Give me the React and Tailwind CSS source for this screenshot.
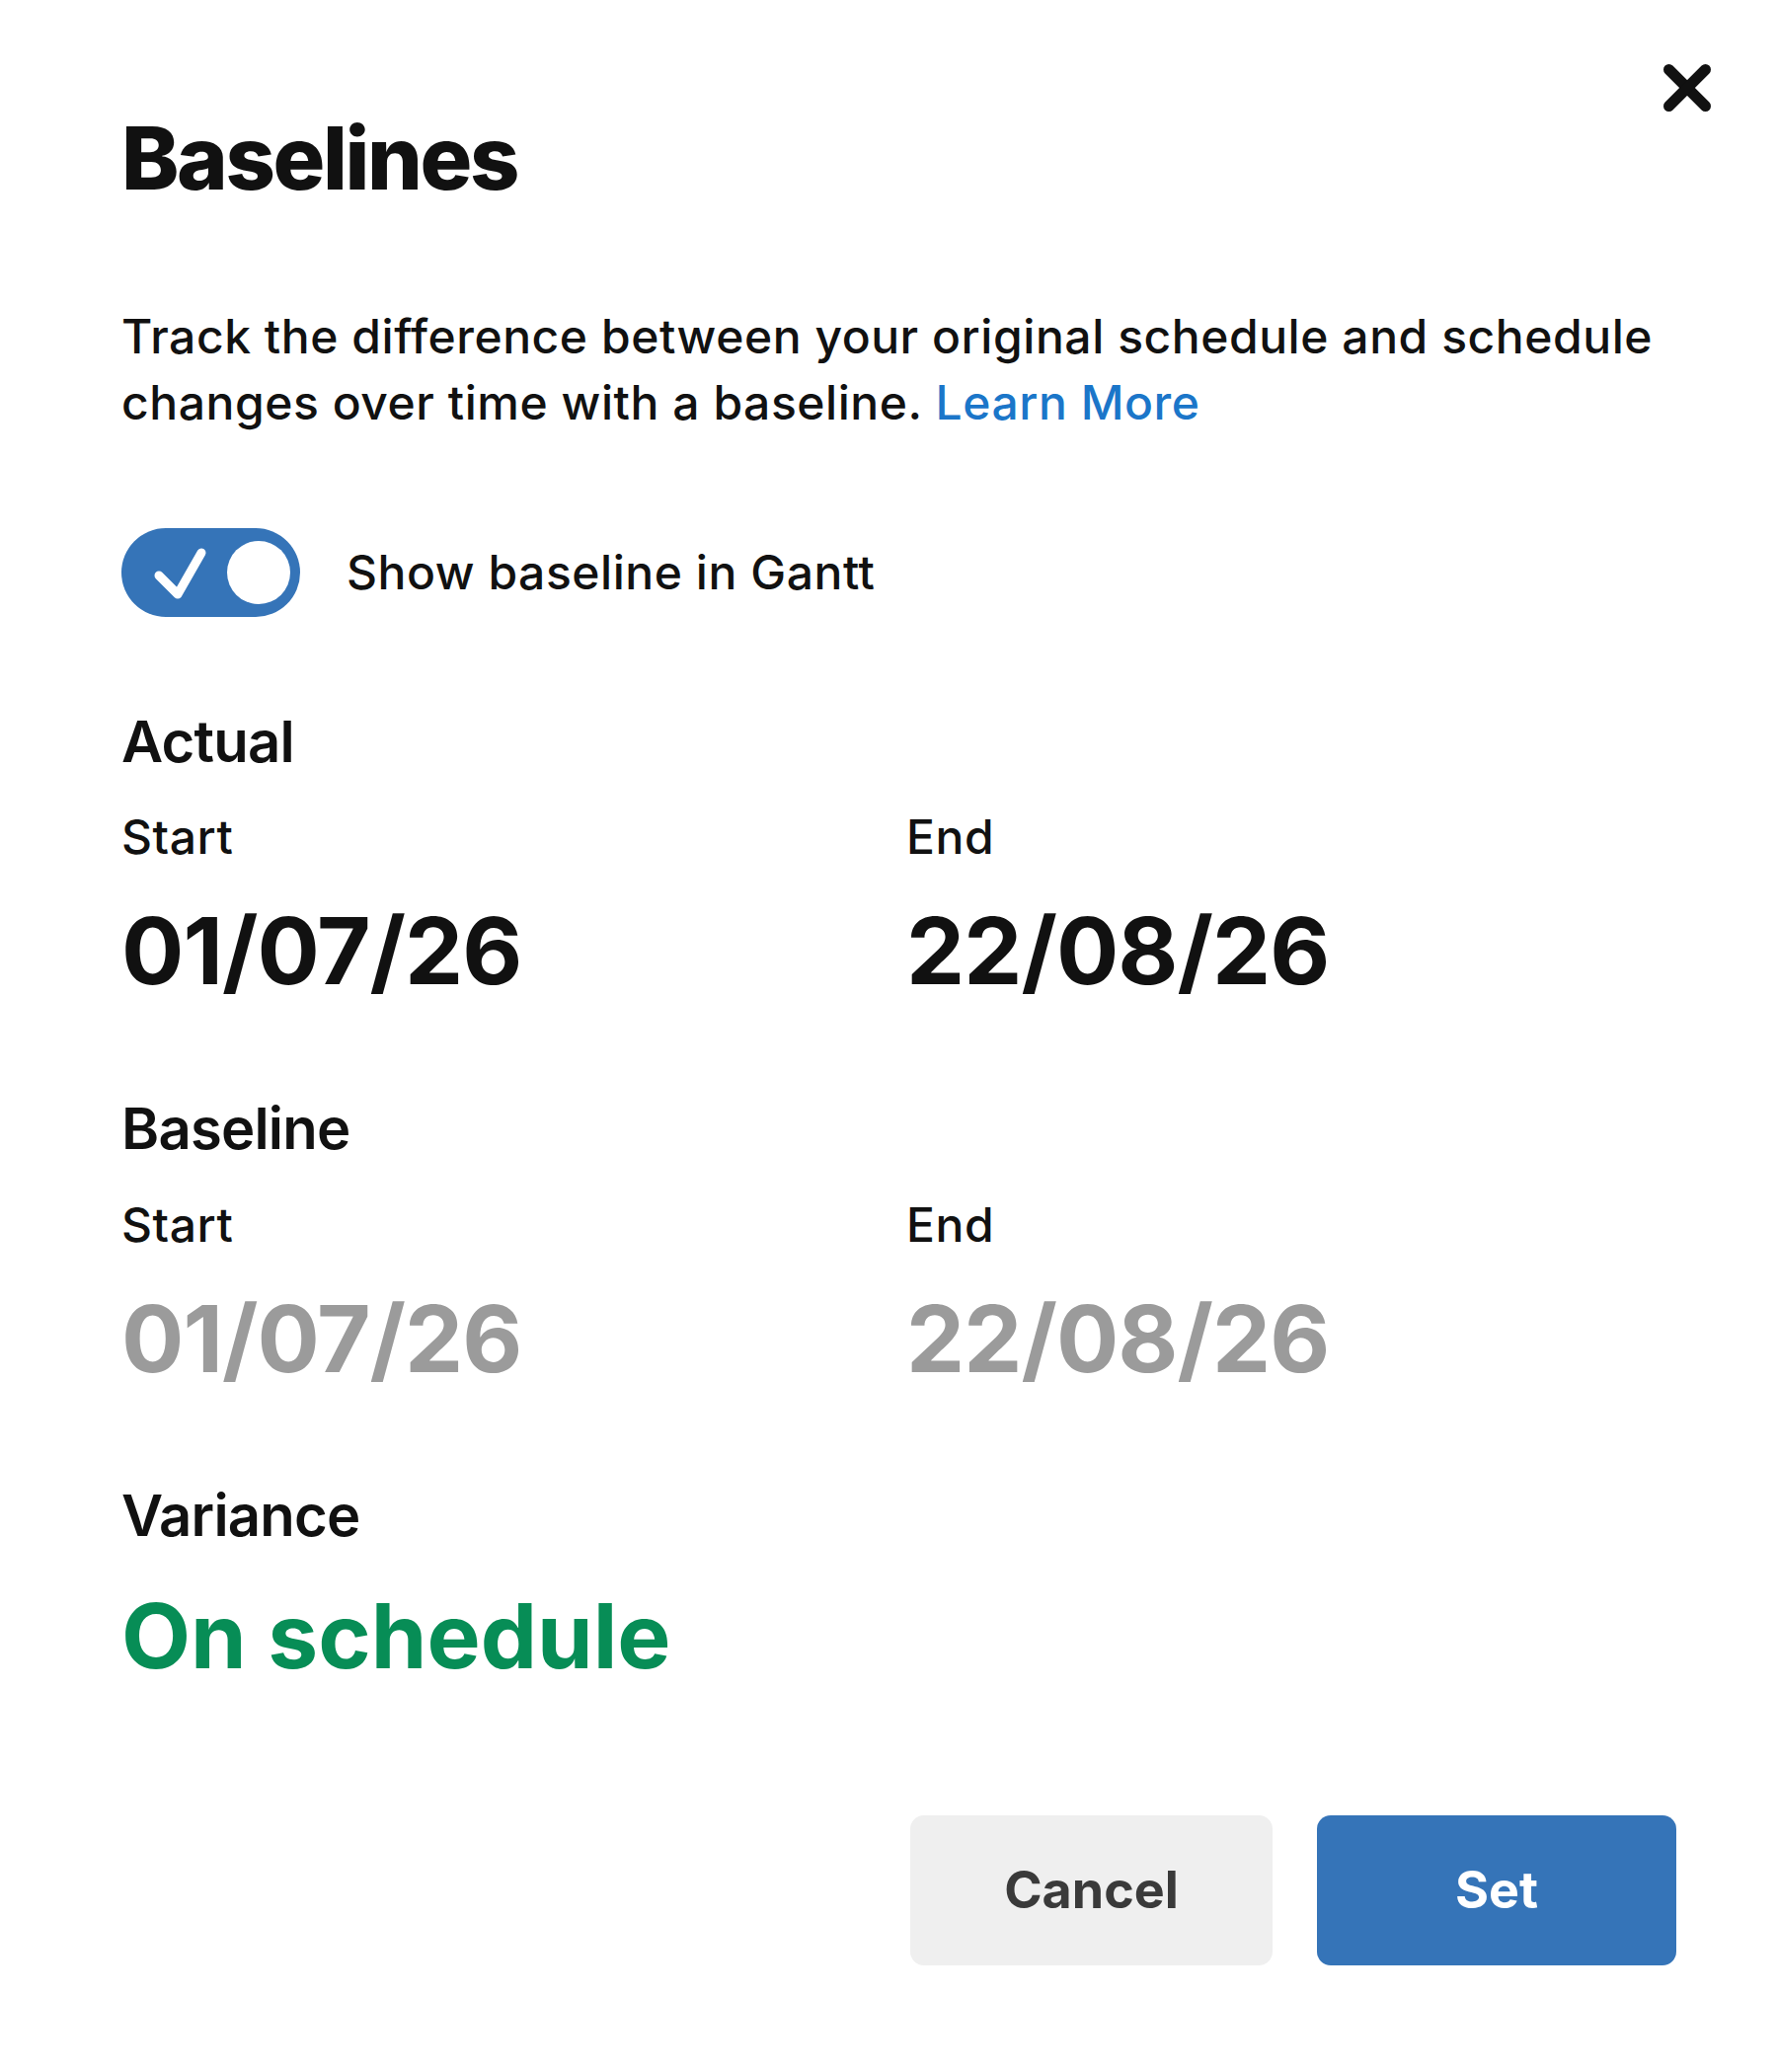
import React, { useState } from 'react';

const CloseIcon = () => (
  <svg width="48" height="48" viewBox="0 0 48 48" fill="none" stroke="#111111" strokeWidth="11" strokeLinecap="round">
    <line x1="5.5" y1="5.5" x2="42.5" y2="42.5" />
    <line x1="42.5" y1="5.5" x2="5.5" y2="42.5" />
  </svg>
);

const Toggle = ({ on, onChange }) => (
  <button
    type="button"
    onClick={() => onChange(!on)}
    className="flex h-[90px] w-[181px] shrink-0 items-center justify-between rounded-full bg-[#3574b8] pl-[28px] pr-[10px]"
  >
    {/* check mark on the left, knob on the right */}
    <svg width="60" height="60" viewBox="0 0 60 60" fill="none" stroke="#ffffff" strokeWidth="9" strokeLinecap="round" strokeLinejoin="round">
      <polyline points="10,33 29,52 53,10" />
    </svg>
    <span className="block h-[64px] w-[64px] rounded-full bg-white" />
  </button>
);

const DatePair = ({ start, end, muted }) => (
  <div className="grid grid-cols-[795px_1fr]">
    <div>
      <div className="text-[48px] leading-[48px] font-medium tracking-[0.55px] text-[#111111]">Start</div>
      <div className={`mt-[44px] text-[94px] leading-[94px] font-bold tracking-[-1px] ${muted ? 'text-[#9b9b9b]' : 'text-[#111111]'}`}>
        {start}
      </div>
    </div>
    <div>
      <div className="text-[48px] leading-[48px] font-medium tracking-[0.55px] text-[#111111]">End</div>
      <div className={`mt-[44px] text-[94px] leading-[94px] font-bold tracking-[-1px] ${muted ? 'text-[#9b9b9b]' : 'text-[#111111]'}`}>
        {end}
      </div>
    </div>
  </div>
);

const App = () => {
  const [showBaseline, setShowBaseline] = useState(true);

  return (
    <div className="min-h-[2099px] w-[1800px] bg-white font-['Inter','Noto_Sans',sans-serif] text-[#111111]">
      <div className="pl-[123px] pr-[102px]">
        {/* header */}
        <div className="flex items-start justify-between">
          <h1 className="mt-[116px] text-[88px] leading-[88px] font-extrabold tracking-[-2.4px]">Baselines</h1>
          <button type="button" className="mt-[65px] mr-[-35px]">
            <CloseIcon />
          </button>
        </div>

        <p className="mt-[103px] w-[1650px] text-[48px] leading-[67px] font-medium tracking-[0.55px]">
          Track the difference between your original schedule and schedule changes over time with a baseline.{' '}
          <a href="#" className="text-[#1b76c9]">Learn More</a>
        </p>

        <div className="mt-[94px] flex items-center gap-[47px]">
          <Toggle on={showBaseline} onChange={setShowBaseline} />
          <span className="text-[48px] leading-[48px] font-medium tracking-[0.55px]">Show baseline in Gantt</span>
        </div>

        {/* actual dates */}
        <h2 className="mt-[97px] text-[58px] leading-[58px] font-semibold tracking-[-0.8px]">Actual</h2>
        <div className="mt-[44px]">
          <DatePair start="01/07/26" end="22/08/26" />
        </div>

        {/* baseline dates */}
        <h2 className="mt-[104px] text-[58px] leading-[58px] font-semibold tracking-[-0.8px]">Baseline</h2>
        <div className="mt-[45px]">
          <DatePair start="01/07/26" end="22/08/26" muted />
        </div>

        {/* variance */}
        <h2 className="mt-[103px] text-[58px] leading-[58px] font-semibold tracking-[-0.8px]">Variance</h2>
        <div className="mt-[48px] text-[91px] leading-[91px] font-bold text-[#078d56]">On schedule</div>

        <div className="mt-[136px] flex justify-end gap-[45px]">
          <button type="button" className="h-[152px] w-[367px] rounded-[14px] bg-[#efefef] text-[52px] font-bold text-[#3a3a3a]">
            Cancel
          </button>
          <button type="button" className="h-[152px] w-[364px] rounded-[14px] bg-[#3574b8] text-[52px] font-bold text-white">
            Set
          </button>
        </div>
      </div>
    </div>
  );
};

export default App;
